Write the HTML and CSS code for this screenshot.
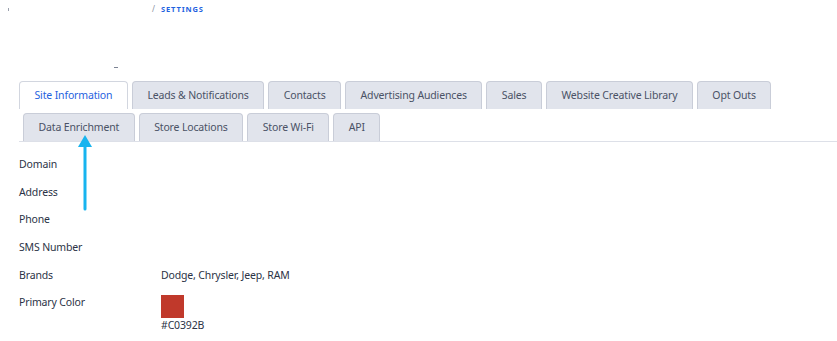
FILE: index.html
```html
<!DOCTYPE html>
<html lang="en">
<head>
    <meta charset="UTF-8">
    <meta name="viewport" content="width=device-width, initial-scale=1.0">
    <title>Settings</title>
    <link rel="stylesheet" href="styles.css">
</head>
<body>
    <div class="breadcrumb">
        <span class="crumb-mark"></span>
        <span class="crumb-sep">/</span>
        <span class="crumb-current">SETTINGS</span>
    </div>
    <div class="title-bar">
        <span class="title-mark"></span>
    </div>

    <div class="tabs">
        <div class="tab-row">
            <div class="tab active">Site Information</div>
            <div class="tab">Leads &amp; Notifications</div>
            <div class="tab">Contacts</div>
            <div class="tab">Advertising Audiences</div>
            <div class="tab">Sales</div>
            <div class="tab">Website Creative Library</div>
            <div class="tab">Opt Outs</div>
        </div>
        <div class="tab-row second">
            <div class="tab">Data Enrichment</div>
            <div class="tab">Store Locations</div>
            <div class="tab">Store Wi-Fi</div>
            <div class="tab">API</div>
        </div>
        <svg class="pointer" width="20" height="80" viewBox="0 0 20 80">
            <line x1="10" y1="10" x2="10" y2="74" stroke="#17b4ef" stroke-width="3" stroke-linecap="round"/>
            <polygon points="10,0 17,12 3,12" fill="#17b4ef"/>
        </svg>
    </div>

    <div class="details">
        <div class="row"><div class="label">Domain</div><div class="value"></div></div>
        <div class="row"><div class="label">Address</div><div class="value"></div></div>
        <div class="row"><div class="label">Phone</div><div class="value"></div></div>
        <div class="row"><div class="label">SMS Number</div><div class="value"></div></div>
        <div class="row"><div class="label">Brands</div><div class="value">Dodge, Chrysler, Jeep, RAM</div></div>
        <div class="row">
            <div class="label">Primary Color</div>
            <div class="value">
                <div class="swatch" style="background-color: #C0392B;"></div>
                <div class="swatch-code">#C0392B</div>
            </div>
        </div>
    </div>
</body>
</html>
```

FILE: styles.css
```css
body {
    font-family: "Noto Sans", "Open Sans", sans-serif;
    font-size: 10.5px;
    letter-spacing: -0.15px;
    color: #2b3346;
    margin: 0;
    padding: 0;
    background-color: #fff;
}
.breadcrumb {
    display: flex;
    align-items: center;
    height: 17px;
    padding-left: 8px;
    letter-spacing: 0;
}
.crumb-mark {
    width: 1px;
    height: 3px;
    background-color: #9aa0ad;
    margin-top: 2px;
}
.crumb-sep {
    margin-left: 143px;
    color: #8a90a0;
    font-size: 8px;
}
.crumb-current {
    margin-left: 6px;
    color: #1f62e0;
    font-size: 7.5px;
    font-weight: bold;
    letter-spacing: 0.9px;
}
.title-bar {
    height: 64px;
    position: relative;
}
.title-mark {
    position: absolute;
    left: 114px;
    top: 50px;
    width: 4px;
    height: 1px;
    background-color: #7c8394;
}
.tabs {
    position: relative;
    margin-left: 19px;
    border-bottom: 1px solid #dde0e8;
}
.tab-row {
    display: flex;
    gap: 4px;
}
.tab-row.second {
    margin-left: 4px;
    margin-top: 4px;
}
.tab {
    height: 27px;
    line-height: 26px;
    padding: 0 14.5px;
    background-color: #e1e4ec;
    color: #4a5266;
    border: 1px solid #c9cdd8;
    border-bottom: none;
    border-radius: 4px 4px 0 0;
    white-space: nowrap;
}
.tab.active {
    background-color: #fff;
    color: #1f62e0;
    border-color: #d2d6df;
}
.pointer {
    position: absolute;
    left: 56px;
    top: 54px;
}
.details {
    padding: 12px 0 20px 19px;
}
.row {
    display: flex;
    min-height: 27.7px;
}
.label {
    width: 142px;
    line-height: 20px;
}
.value {
    line-height: 20px;
}
.swatch {
    width: 23px;
    height: 23px;
    margin-top: 3px;
}
.swatch-code {
    line-height: 14px;
}
```
